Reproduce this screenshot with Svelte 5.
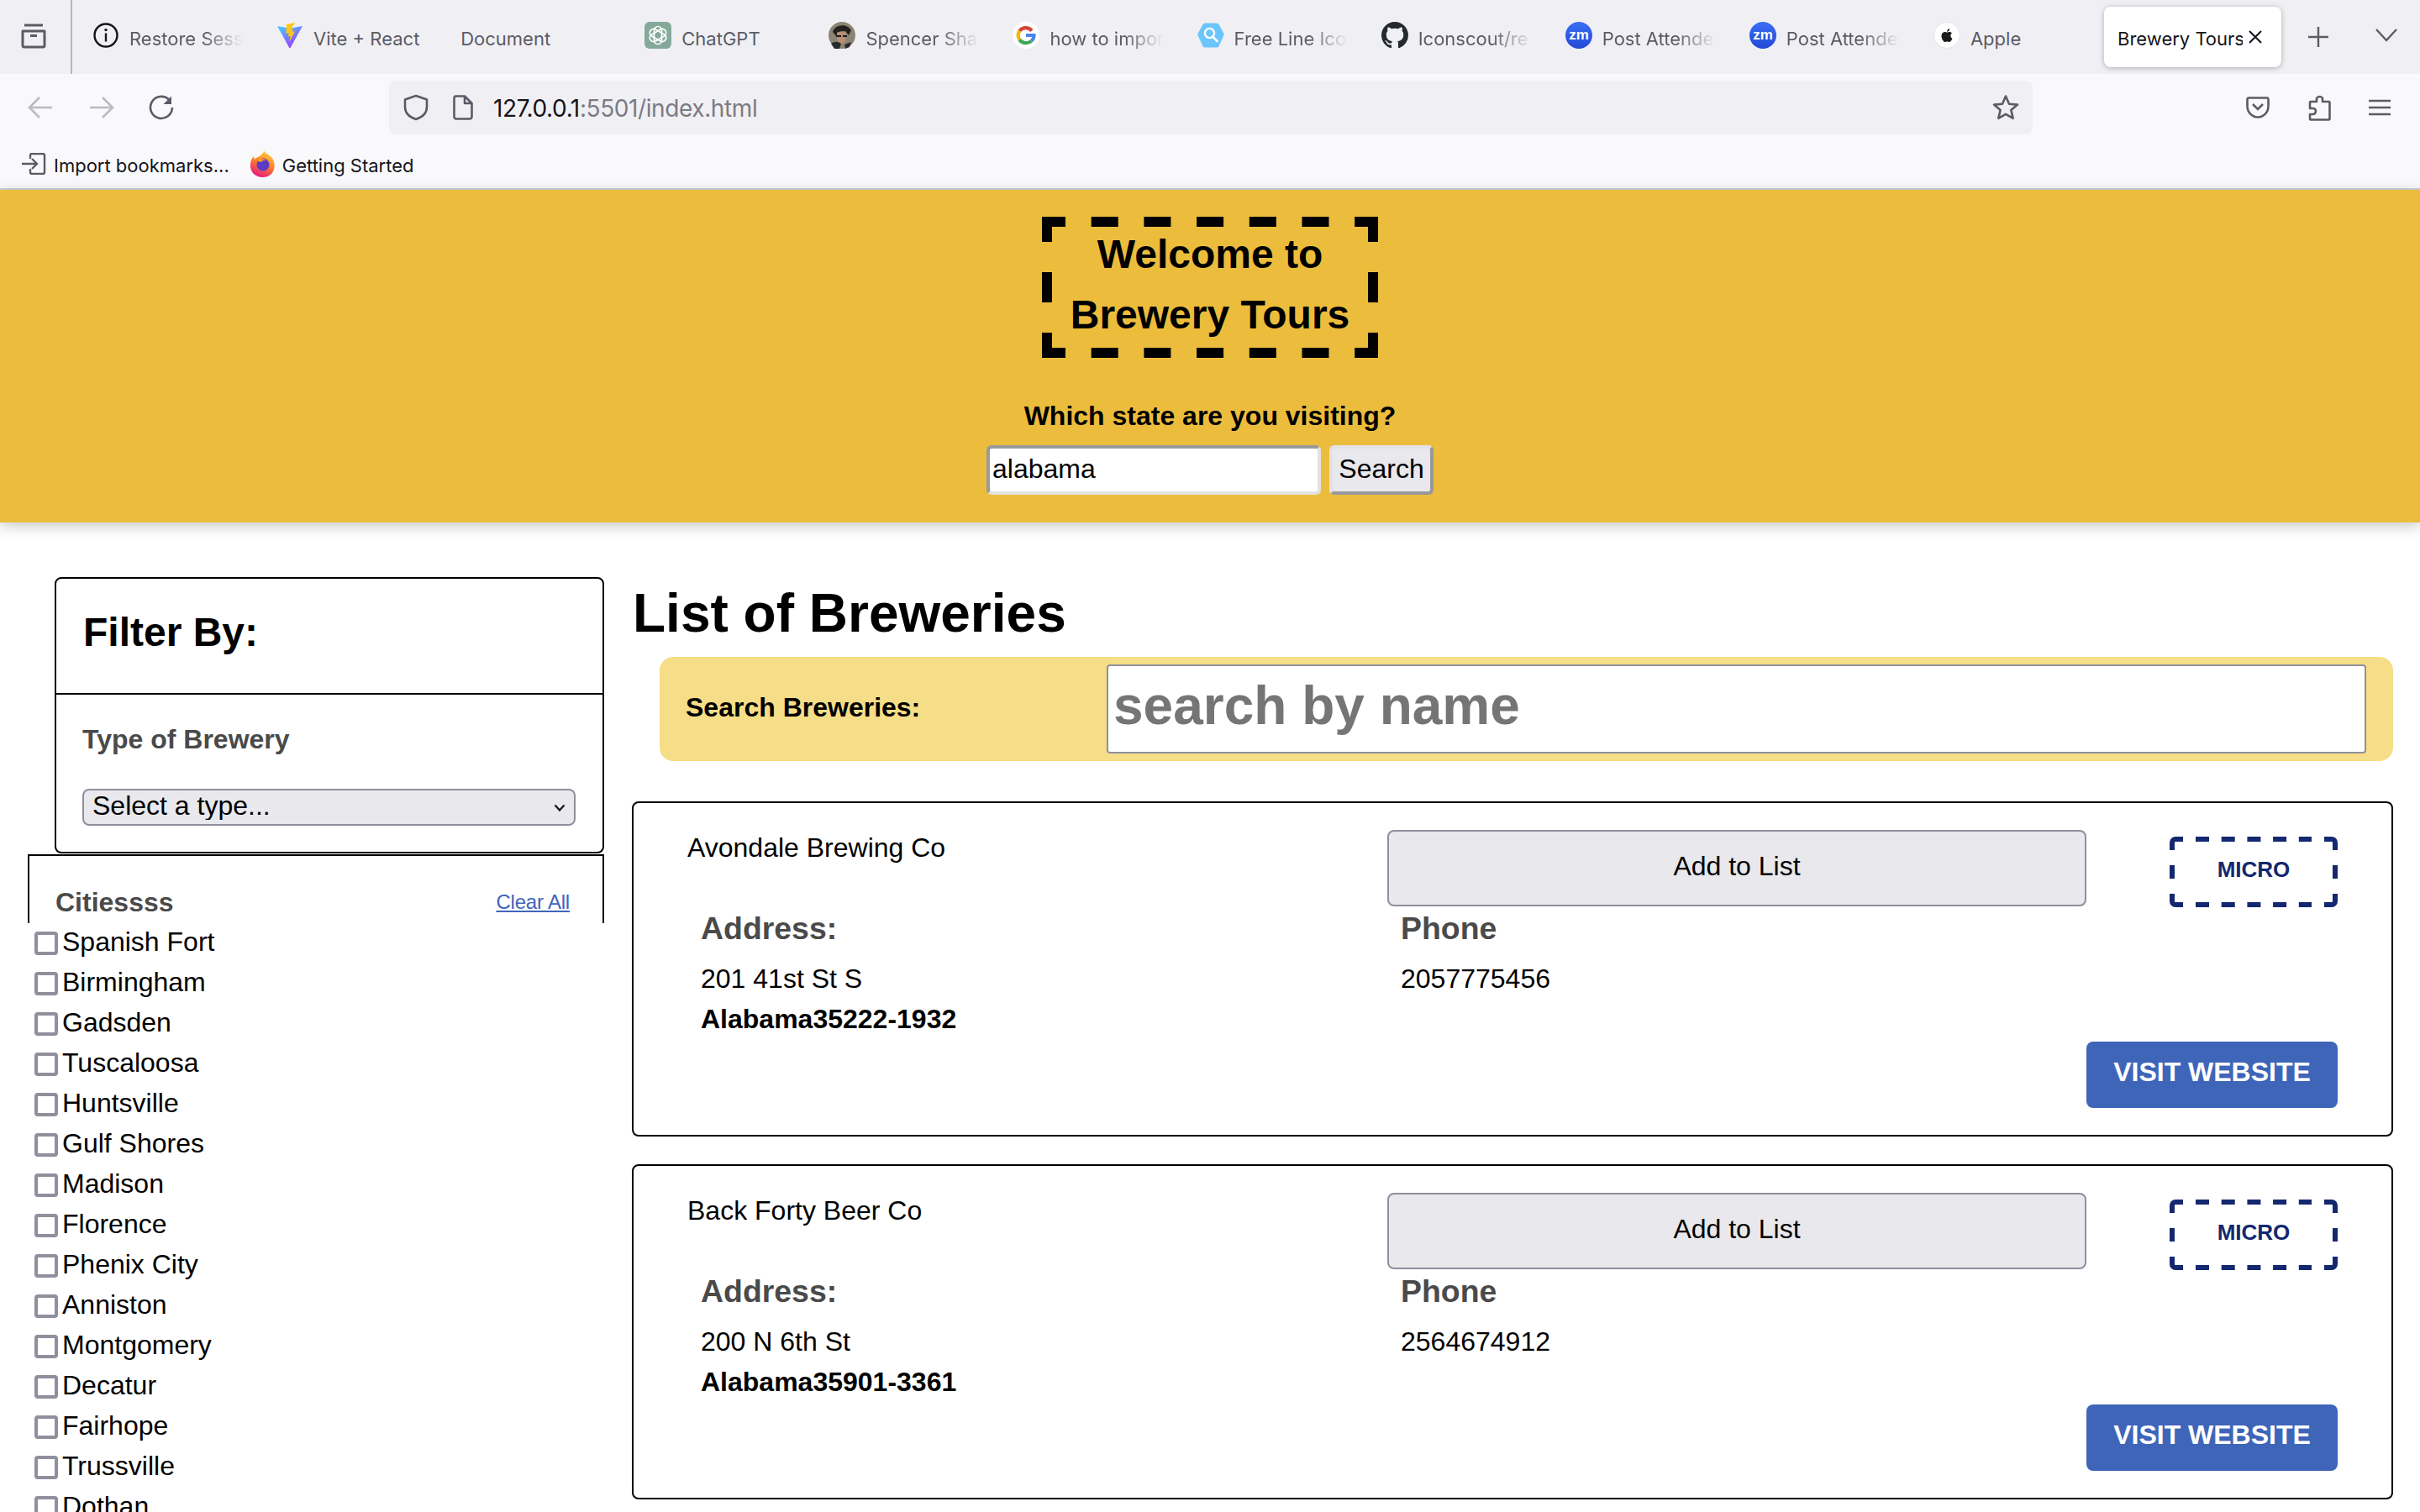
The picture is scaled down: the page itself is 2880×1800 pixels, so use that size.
<script>
  const tabs = [
    { title: 'Restore Session', short: 'Restore Sess', icon: 'info', fade: true },
    { title: 'Vite + React', icon: 'vite' },
    { title: 'Document' },
    { title: 'ChatGPT', icon: 'chatgpt' },
    { title: 'Spencer Sharp', short: 'Spencer Sha', icon: 'avatar', fade: true },
    { title: 'how to import', short: 'how to impor', icon: 'google', fade: true },
    { title: 'Free Line Icons', short: 'Free Line Ico', icon: 'search', fade: true },
    { title: 'Iconscout/react', short: 'Iconscout/re', icon: 'github', fade: true },
    { title: 'Post Attendee', short: 'Post Attende', icon: 'zoom', fade: true },
    { title: 'Post Attendee', short: 'Post Attende', icon: 'zoom', fade: true },
    { title: 'Apple', icon: 'apple' }
  ];

  const cities = [
    'Spanish Fort', 'Birmingham', 'Gadsden', 'Tuscaloosa', 'Huntsville',
    'Gulf Shores', 'Madison', 'Florence', 'Phenix City', 'Anniston',
    'Montgomery', 'Decatur', 'Fairhope', 'Trussville', 'Dothan'
  ];

  const breweries = [
    { name: 'Avondale Brewing Co', street: '201 41st St S', region: 'Alabama35222-1932', phone: '2057775456', type: 'MICRO' },
    { name: 'Back Forty Beer Co', street: '200 N 6th St', region: 'Alabama35901-3361', phone: '2564674912', type: 'MICRO' }
  ];
</script>

{#snippet favicon(kind)}
  <svg class="fav" viewBox="0 0 32 32" aria-hidden="true">
    {#if kind === 'info'}
      <circle cx="16" cy="16" r="13.5" fill="none" stroke="#15141a" stroke-width="2.4" />
      <rect x="14.8" y="13.5" width="2.4" height="10" fill="#15141a" />
      <circle cx="16" cy="9.6" r="1.7" fill="#15141a" />
    {:else if kind === 'vite'}
      <defs>
        <linearGradient id="viteg" x1="0" y1="0" x2="0.6" y2="1">
          <stop offset="0" stop-color="#41d1ff" />
          <stop offset="1" stop-color="#9d3cff" />
        </linearGradient>
      </defs>
      <path d="M31 5 16.5 31a.8.8 0 0 1-1.2 0L1 5l15 2.8Z" fill="url(#viteg)" />
      <path d="M22.5 1 12 3l-.6 11 3.2-.7-.8 4.3 2.9-.8-1.4 7.3 6.8-12.8-3.3.6 1-4-3.2.7Z" fill="#ffc517" />
    {:else if kind === 'chatgpt'}
      <rect width="32" height="32" rx="6" fill="#84a99a" />
      <g fill="none" stroke="#fff" stroke-width="1.7">
        <rect x="11.5" y="5.5" width="9" height="21" rx="4.5" />
        <rect x="11.5" y="5.5" width="9" height="21" rx="4.5" transform="rotate(60 16 16)" />
        <rect x="11.5" y="5.5" width="9" height="21" rx="4.5" transform="rotate(120 16 16)" />
      </g>
    {:else if kind === 'avatar'}
      <circle cx="16" cy="16" r="16" fill="#8b8474" />
      <path d="M5 12c2-9 17-11 22-2l-3 6-4-5-8 1-2 6Z" fill="#23211f" />
      <path d="M10 13c3-2 9-2 11 0l-1 11-5 3-5-5Z" fill="#b58d73" />
      <path d="M9 16h6v2H9Zm8 0h5v2h-5Z" fill="#1c1a19" />
      <path d="M3 26c4-3 8-3 12 0l-2 6H7Zm16 1 8-3-2 6-5 2Z" fill="#2b2a2a" />
    {:else if kind === 'google'}
      <circle cx="16" cy="16" r="16" fill="#fff" />
      <g fill="none" stroke-width="4.2">
        <path d="M23 10.5A9.6 9.6 0 0 0 8.3 10.8" stroke="#d5453a" />
        <path d="M8.3 10.8a9.6 9.6 0 0 0 0 10.4" stroke="#f2b705" />
        <path d="M8.3 21.2a9.6 9.6 0 0 0 14.2 1.6" stroke="#3aa757" />
        <path d="M22.5 22.8c1.9-1.7 3-4 3-6.8H16" stroke="#4b85f0" />
      </g>
    {:else if kind === 'search'}
      <path d="M9 1.5h14a3 3 0 0 1 2.6 1.5l5.6 10.5a3 3 0 0 1 0 3L25.6 29a3 3 0 0 1-2.6 1.5H9A3 3 0 0 1 6.4 29L.8 16.5a3 3 0 0 1 0-3L6.4 3A3 3 0 0 1 9 1.5Z" fill="#6cc5fb" />
      <circle cx="14.5" cy="13.5" r="5.6" fill="none" stroke="#fff" stroke-width="2.4" />
      <path d="m18.5 17.8 5 5.2" stroke="#fff" stroke-width="2.6" stroke-linecap="round" />
    {:else if kind === 'github'}
      <path transform="scale(2)" fill="#24292f" d="M8 0C3.58 0 0 3.58 0 8c0 3.54 2.29 6.53 5.47 7.59.4.07.55-.17.55-.38 0-.19-.01-.82-.01-1.49-2.01.37-2.53-.49-2.69-.94-.09-.23-.48-.94-.82-1.13-.28-.15-.68-.52-.01-.53.63-.01 1.08.58 1.23.82.72 1.21 1.87.87 2.33.66.07-.52.28-.87.51-1.07-1.78-.2-3.64-.89-3.64-3.95 0-.87.31-1.59.82-2.15-.08-.2-.36-1.02.08-2.12 0 0 .67-.21 2.2.82.64-.18 1.32-.27 2-.27.68 0 1.36.09 2 .27 1.53-1.04 2.2-.82 2.2-.82.44 1.1.16 1.92.08 2.12.51.56.82 1.27.82 2.15 0 3.07-1.87 3.75-3.65 3.95.29.25.54.73.54 1.48 0 1.07-.01 1.93-.01 2.2 0 .21.15.46.55.38A8.013 8.013 0 0 0 16 8c0-4.42-3.58-8-8-8z" />
    {:else if kind === 'zoom'}
      <defs>
        <linearGradient id="zoomg" x1="0" y1="0" x2="0" y2="1">
          <stop offset="0" stop-color="#3a6ef5" />
          <stop offset="1" stop-color="#2348d6" />
        </linearGradient>
      </defs>
      <circle cx="16" cy="16" r="16" fill="url(#zoomg)" />
      <text x="16" y="21" class="zm">zm</text>
    {:else if kind === 'apple'}
      <circle cx="16" cy="16" r="15.5" fill="#fff" stroke="#e4e4e7" />
      <path fill="#1b1b1d" d="M20.3 16.6c0-2 1.6-2.9 1.7-3-1-1.4-2.4-1.6-2.9-1.6-1.2-.1-2.4.7-3 .7-.6 0-1.6-.7-2.6-.7-1.3 0-2.6.8-3.3 2-1.4 2.4-.4 6 1 8 .7 1 1.5 2 2.5 2 1 0 1.4-.6 2.6-.6 1.2 0 1.5.6 2.6.6 1.1 0 1.8-1 2.4-1.9.8-1.1 1.1-2.2 1.1-2.3-.1 0-2.1-.8-2.1-3.2ZM18.4 10.6c.5-.6.9-1.5.8-2.4-.8 0-1.7.5-2.3 1.2-.5.6-.9 1.5-.8 2.3.9.1 1.8-.4 2.3-1.1Z" />
    {/if}
  </svg>
{/snippet}

<div class="page">
  <!-- browser chrome -->
  <div class="tabstrip">
    <div class="view-btn">
      <svg class="ico" width="32" height="32" viewBox="0 0 32 32">
        <path d="M5 3h22M3 10h26v17a2 2 0 0 1-2 2H5a2 2 0 0 1-2-2Z" fill="none" stroke="#5b5b66" stroke-width="3" stroke-linejoin="round" />
        <path d="M12 15.5h8" stroke="#5b5b66" stroke-width="3" />
      </svg>
    </div>
    {#each tabs as t}
      <div class="tab">
        {#if t.icon}{@render favicon(t.icon)}{/if}
        <span class="tab-title" class:fade={t.fade}>{t.short || t.title}</span>
      </div>
    {/each}
    <div class="tab active">
      <span class="tab-title">Brewery Tours</span>
      <svg width="18" height="18" viewBox="0 0 18 18"><path d="m2 2 14 14M16 2 2 16" stroke="#15141a" stroke-width="2" /></svg>
    </div>
    <svg class="plus" width="26" height="26" viewBox="0 0 26 26"><path d="M13 1v24M1 13h24" stroke="#5b5b66" stroke-width="2.4" /></svg>
    <svg class="chev" width="26" height="16" viewBox="0 0 26 16"><path d="m1 1 12 13L25 1" fill="none" stroke="#5b5b66" stroke-width="2.4" /></svg>
  </div>

  <div class="toolbar">
    <svg class="nav" width="30" height="28" viewBox="0 0 30 28"><path d="M29 14H3M14 2 2 14l12 12" fill="none" stroke="#bbbbc0" stroke-width="2.6" /></svg>
    <svg class="nav" width="30" height="28" viewBox="0 0 30 28"><path d="M1 14h26M16 2l12 12-12 12" fill="none" stroke="#bbbbc0" stroke-width="2.6" /></svg>
    <svg class="nav reload" width="30" height="30" viewBox="0 0 30 30">
      <path d="M24 5.5A13 13 0 1 0 28 15" fill="none" stroke="#5b5b66" stroke-width="2.6" />
      <path d="M27 1.5V11h-9.5Z" fill="#5b5b66" />
    </svg>
    <div class="urlbar">
      <svg width="30" height="32" viewBox="0 0 30 32"><path d="M15 2 28 6.5V15c0 7-5 12.5-13 15C7 27.5 2 22 2 15V6.5Z" fill="none" stroke="#5b5b66" stroke-width="2.6" stroke-linejoin="round" /></svg>
      <svg class="doc" width="24" height="30" viewBox="0 0 24 30"><path d="M3 1.5h11l8.5 8.5v16a2.5 2.5 0 0 1-2.5 2.5H4A2.5 2.5 0 0 1 1.5 26V3.5a2 2 0 0 1 1.5-2Zm11 0V10h8.5" fill="none" stroke="#5b5b66" stroke-width="2.6" stroke-linejoin="round" /></svg>
      <span class="url"><b>127.0.0.1</b>:5501/index.html</span>
      <svg class="star" width="32" height="32" viewBox="0 0 32 32"><path d="m16 2.5 4 9.2 10 .9-7.6 6.5 2.3 9.8L16 23.8l-8.7 5.1 2.3-9.8L2 12.6l10-.9Z" fill="none" stroke="#5b5b66" stroke-width="2.6" stroke-linejoin="round" /></svg>
    </div>
    <svg class="pocket" width="28" height="26" viewBox="0 0 28 26"><path d="M3 1.5h22A1.5 1.5 0 0 1 26.5 3v8.5a12.5 13 0 0 1-25 0V3A1.5 1.5 0 0 1 3 1.5Z" fill="none" stroke="#5b5b66" stroke-width="2.6" /><path d="m8 9 6 6 6-6" fill="none" stroke="#5b5b66" stroke-width="2.6" /></svg>
    <svg class="ext" width="28" height="32" viewBox="0 0 28 32"><path d="M11 9V5a4 4 0 0 1 7 0v4h7.5a1 1 0 0 1 1 1v19.5a1 1 0 0 1-1 1H4a1 1 0 0 1-1-1V24h3.5a3.5 3.5 0 0 0 0-7H3v-7a1 1 0 0 1 1-1Z" fill="none" stroke="#5b5b66" stroke-width="2.6" stroke-linejoin="round" /></svg>
    <svg class="menu" width="26" height="20" viewBox="0 0 26 20"><path d="M0 2h26M0 10h26M0 18h26" stroke="#5b5b66" stroke-width="2.6" /></svg>
  </div>

  <div class="bookmarks">
    <svg width="30" height="26" viewBox="0 0 30 26"><path d="M11 7V3a2 2 0 0 1 2-2h13a2 2 0 0 1 2 2v20a2 2 0 0 1-2 2H13a2 2 0 0 1-2-2v-4M1 13h18M13 7l6 6-6 6" fill="none" stroke="#5b5b66" stroke-width="2.4" /></svg>
    <span class="bm-text">Import bookmarks...</span>
    <svg class="fx" width="32" height="32" viewBox="0 0 32 32">
      <defs>
        <linearGradient id="fxg" x1="0.7" y1="0" x2="0.3" y2="1">
          <stop offset="0" stop-color="#ffd43a" />
          <stop offset="0.5" stop-color="#ff7a2b" />
          <stop offset="1" stop-color="#e31587" />
        </linearGradient>
      </defs>
      <path d="M17 0c1 4 8 5 11 11 4 8 1 21-12 21C6 32 0 25 1 16c.5-4 2-7 4-9l1 4c2-3 5-3 7-5 2-2 4-3 4-6Z" fill="url(#fxg)" />
      <circle cx="16" cy="17" r="7.5" fill="#5b3cc4" />
      <path d="M9 12c3-3 9-2 11 0-3-.5-5 .5-6 2-2 0-3.5-1-5-2Z" fill="#ff9a1f" />
    </svg>
    <span class="bm-text">Getting Started</span>
  </div>

  <!-- page -->
  <header class="hero">
    <h2 class="title">
      Welcome to<br />Brewery Tours
      <svg class="title-dash" width="400" height="168" viewBox="0 0 400 168">
        <g stroke="#000" stroke-width="12">
          <path d="M0 6h400M0 162h400" stroke-dasharray="32 30.7" stroke-dashoffset="4" />
          <path d="M6 0v168M394 0v168" stroke-dasharray="36 36" stroke-dashoffset="6" />
        </g>
      </svg>
    </h2>
    <label class="state-label" for="state">Which state are you visiting?</label>
    <form class="state-form">
      <input id="state" class="state-input" type="text" value="alabama" />
      <button class="state-btn" type="button">Search</button>
    </form>
  </header>

  <main class="layout">
    <aside class="sidebar">
      <div class="filter-card">
        <div class="filter-head"><h2>Filter By:</h2></div>
        <div class="filter-body">
          <h3>Type of Brewery</h3>
          <div class="select-wrap">
            <select>
              <option>Select a type...</option>
            </select>
            <svg class="select-arrow" width="14" height="10" viewBox="0 0 14 10"><path d="m1.5 1.5 5.5 6 5.5-6" fill="none" stroke="#15141a" stroke-width="2.2" /></svg>
          </div>
        </div>
      </div>
      <div class="cities-head">
        <h3>Citiessss</h3>
        <a href="#clear">Clear All</a>
      </div>
      <ul class="cities">
        {#each cities as c}
          <li><input type="checkbox" /><span>{c}</span></li>
        {/each}
      </ul>
    </aside>

    <section class="content">
      <h1>List of Breweries</h1>
      <div class="searchbar">
        <label for="byname">Search Breweries:</label>
        <input id="byname" type="text" placeholder="search by name" />
      </div>

      {#each breweries as b}
        <article class="brewery">
          <p class="name">{b.name}</p>
          <button class="add" type="button">Add to List</button>
          <div class="kind">
            <span>{b.type}</span>
            <svg class="kind-dash" width="200" height="84" viewBox="0 0 200 84">
              <g fill="none" stroke="#14286f" stroke-width="6">
                <path d="M3 16V7a4 4 0 0 1 4-4h9M184 3h9a4 4 0 0 1 4 4v9M197 68v9a4 4 0 0 1-4 4h-9M16 81H7a4 4 0 0 1-4-4v-9" />
                <path d="M31 3h138M31 81h138" stroke-dasharray="16 14.7" />
                <path d="M3 34v16M197 34v16" />
              </g>
            </svg>
          </div>
          <div class="info">
            <h3>Address:</h3>
            <p>{b.street}</p>
            <p><b>{b.region}</b></p>
          </div>
          <div class="info">
            <h3>Phone</h3>
            <p>{b.phone}</p>
          </div>
          <a class="visit" href="#visit">VISIT WEBSITE</a>
        </article>
      {/each}
    </section>
  </main>
</div>

<style>
  :global(body) {
    margin: 0;
    background: #fff;
  }

  .page {
    width: 2880px;
    height: 1800px;
    overflow: hidden;
    font-family: "Liberation Sans", Arial, sans-serif;
    color: #000;
  }

  /* browser chrome */
  .tabstrip {
    display: flex;
    align-items: center;
    height: 88px;
    background: #f0f0f4;
    font-family: Inter, "Liberation Sans", sans-serif;
    font-size: 22px;
    color: #5b5b66;
  }
  .view-btn {
    display: flex;
    align-items: center;
    box-sizing: border-box;
    width: 86px;
    height: 88px;
    padding-left: 24px;
    margin-right: 8px;
    border-right: 2px solid #b8b8bc;
    flex: none;
  }
  .ico { margin-top: -2px; }
  .tab {
    display: flex;
    align-items: center;
    gap: 12px;
    box-sizing: border-box;
    width: 219.1px;
    height: 72px;
    padding: 0 24px 0 16px;
    flex: none;
  }
  .tab-title {
    white-space: nowrap;
    overflow: hidden;
    flex: 1;
    padding-top: 4px;
  }
  .tab-title.fade {
    -webkit-mask-image: linear-gradient(to right, #000 65%, transparent 100%);
    mask-image: linear-gradient(to right, #000 65%, transparent 100%);
  }
  .fav {
    width: 32px;
    height: 32px;
    flex: none;
    margin-top: -4px;
  }
  .zm {
    font-family: "Liberation Sans", sans-serif;
    font-size: 17px;
    font-weight: 700;
    fill: #fff;
    text-anchor: middle;
  }
  .tab.active {
    width: 211px;
    padding: 0 22px 0 16px;
    gap: 6px;
    background: #fff;
    color: #15141a;
    border-radius: 8px;
    box-shadow: 0 1px 6px rgba(0, 0, 0, 0.28);
  }
  .plus { margin-left: 31px; }
  .chev { margin-left: 55px; margin-top: -4px; }

  .toolbar {
    display: flex;
    align-items: center;
    box-sizing: border-box;
    height: 80px;
    padding-left: 33px;
    background: #f9f9fb;
  }
  .nav { margin-right: 43px; flex: none; }
  .reload { margin-right: 256px; margin-left: -2px; }
  .urlbar {
    display: flex;
    align-items: center;
    box-sizing: border-box;
    width: 1956px;
    height: 64px;
    padding: 0 16px 0 17px;
    background: #f0f0f4;
    border-radius: 8px;
    flex: none;
  }
  .doc { margin-left: 29px; }
  .url {
    margin-left: 24px;
    padding-top: 2px;
    font-family: Inter, "Liberation Sans", sans-serif;
    font-size: 28px;
    letter-spacing: -0.4px;
    color: #7b7b84;
  }
  .url b {
    font-weight: 400;
    color: #15141a;
  }
  .star { margin-left: auto; }
  .pocket { margin-left: 254px; flex: none; }
  .ext { margin-left: 45px; flex: none; }
  .menu { margin-left: 45px; flex: none; }

  .bookmarks {
    display: flex;
    align-items: center;
    box-sizing: border-box;
    height: 58px;
    padding: 0 0 2px 25px;
    background: #f9f9fb;
    border-bottom: 2px solid #cfcfd8;
    font-family: Inter, "Liberation Sans", sans-serif;
    font-size: 22px;
    color: #15141a;
  }
  .bm-text {
    margin-left: 9px;
    padding-top: 4px;
    white-space: nowrap;
  }
  .fx { margin-left: 24px; margin-right: -2px; flex: none; }

  /* hero */
  .hero {
    position: relative;
    display: flex;
    flex-direction: column;
    align-items: center;
    box-sizing: border-box;
    height: 396px;
    padding-top: 32px;
    background: #ecbd3c;
    box-shadow: 0 4px 16px rgba(0, 0, 0, 0.22);
  }
  .title {
    position: relative;
    box-sizing: border-box;
    width: 400px;
    height: 168px;
    margin: 0;
    padding: 9px 0 0;
    font-size: 48px;
    line-height: 72px;
    font-weight: 700;
    text-align: center;
  }
  .title-dash {
    position: absolute;
    inset: 0;
  }
  .state-label {
    margin-top: 51px;
    font-size: 32px;
    line-height: 37px;
    font-weight: 700;
  }
  .state-form {
    display: flex;
    gap: 10px;
    margin-top: 16px;
  }
  .state-input {
    box-sizing: border-box;
    width: 398px;
    height: 59px;
    padding: 0 3px 2px;
    border: 4px solid #9a9a9a;
    border-right-color: #e2e2e2;
    border-bottom-color: #e2e2e2;
    border-radius: 6px;
    font: 32px "Liberation Sans", Arial, sans-serif;
    background: #fff;
    color: #000;
  }
  .state-btn {
    box-sizing: border-box;
    width: 124px;
    height: 59px;
    padding: 0 0 2px;
    border: 4px solid #e2e2e6;
    border-right-color: #98989c;
    border-bottom-color: #98989c;
    border-radius: 6px;
    background: #e8e8ed;
    font: 32px "Liberation Sans", Arial, sans-serif;
    color: #000;
  }

  /* main */
  .layout {
    display: flex;
    align-items: flex-start;
  }
  .sidebar {
    box-sizing: border-box;
    width: 752px;
    padding: 65px 33px 0 33px;
    flex: none;
  }
  .filter-card {
    box-sizing: border-box;
    height: 329px;
    margin-left: 32px;
    border: 2px solid #000;
    border-radius: 8px;
  }
  .filter-head {
    box-sizing: border-box;
    height: 138px;
    padding: 36px 0 0 32px;
    border-bottom: 2px solid #000;
  }
  .filter-head h2 {
    margin: 0;
    font-size: 48px;
    line-height: 56px;
  }
  .filter-body {
    padding: 35px 32px 0 31px;
  }
  .filter-body h3,
  .cities-head h3 {
    margin: 0;
    font-size: 32px;
    line-height: 37px;
    color: #4a4a4a;
  }
  .select-wrap {
    position: relative;
    margin-top: 40px;
  }
  .select-wrap select {
    display: block;
    box-sizing: border-box;
    width: 100%;
    height: 44px;
    padding: 0 10px 5px;
    appearance: none;
    background: #e8e8ed;
    border: 2px solid #8f8f9d;
    border-radius: 8px;
    font: 32px "Liberation Sans", Arial, sans-serif;
    color: #000;
  }
  .select-arrow {
    position: absolute;
    right: 12px;
    top: 18px;
  }
  .cities-head {
    display: flex;
    justify-content: space-between;
    align-items: center;
    box-sizing: border-box;
    height: 82px;
    margin-top: 1px;
    padding: 30px 39px 0 31px;
    border: 2px solid #000;
    border-bottom: 0;
  }
  .cities-head a {
    font-size: 24px;
    letter-spacing: -0.2px;
    color: #3e65b9;
  }
  .cities {
    list-style: none;
    margin: 0;
    padding: 0 0 0 8px;
  }
  .cities li {
    display: flex;
    align-items: center;
    height: 48px;
    font-size: 32px;
  }
  .cities li span {
    margin-top: -3px;
  }
  .cities input {
    appearance: none;
    box-sizing: border-box;
    width: 28px;
    height: 28px;
    margin: 0 5px 0 0;
    background: #fff;
    border: 4px solid #8f8f9d;
    border-radius: 4px;
    flex: none;
  }

  .content {
    flex: 1;
    padding-right: 32px;
  }
  .content h1 {
    margin: 0;
    padding: 71px 0 0 1px;
    font-size: 64px;
    line-height: 74px;
  }
  .searchbar {
    display: flex;
    align-items: center;
    box-sizing: border-box;
    height: 124px;
    margin: 15px 0 48px 33px;
    padding: 0 32px 0 31px;
    background: #f6dd87;
    border-radius: 16px;
  }
  .searchbar label {
    width: 501px;
    margin-top: -3px;
    font-size: 32px;
    font-weight: 700;
    flex: none;
  }
  .searchbar input {
    box-sizing: border-box;
    flex: 1;
    height: 106px;
    min-width: 0;
    padding: 0 6px 8px;
    border: 2px solid #8f8f9d;
    border-radius: 4px;
    background: #fff;
    font: 700 64px "Liberation Sans", Arial, sans-serif;
  }
  .searchbar input::placeholder {
    color: #757575;
    opacity: 1;
  }

  .brewery {
    display: grid;
    grid-template-columns: 833px 832px 1fr;
    grid-template-rows: 91px auto auto;
    align-content: start;
    box-sizing: border-box;
    height: 399px;
    margin-bottom: 33px;
    padding: 32px 64px 0 64px;
    border: 2px solid #000;
    border-radius: 8px;
  }
  .name {
    margin: 0;
    padding-top: 3px;
    font-size: 32px;
    line-height: 37px;
  }
  .add {
    box-sizing: border-box;
    height: 91px;
    padding: 0 0 4px;
    background: #e8e8ed;
    border: 2px solid #8f8f9d;
    border-radius: 8px;
    font: 32px "Liberation Sans", Arial, sans-serif;
    color: #000;
  }
  .kind {
    position: relative;
    display: flex;
    align-items: center;
    justify-content: center;
    justify-self: end;
    box-sizing: border-box;
    width: 200px;
    height: 84px;
    padding-bottom: 6px;
    margin-top: 8px;
    font-size: 26px;
    font-weight: 700;
    color: #14286f;
  }
  .kind-dash {
    position: absolute;
    inset: 0;
  }
  .info {
    padding: 5px 0 0 16px;
  }
  .info h3 {
    margin: 0 0 14px;
    font-size: 37.44px;
    line-height: 43px;
    color: #4a4a4a;
  }
  .info p {
    margin: 0;
    font-size: 32px;
    line-height: 48px;
  }
  .visit {
    grid-column: 2 / 4;
    justify-self: end;
    box-sizing: border-box;
    width: 299px;
    height: 79px;
    margin-top: 3px;
    padding-top: 18px;
    background: #3f65b9;
    border-radius: 8px;
    font-size: 32px;
    line-height: 37px;
    font-weight: 700;
    color: #fff;
    text-align: center;
    text-decoration: none;
  }
</style>
